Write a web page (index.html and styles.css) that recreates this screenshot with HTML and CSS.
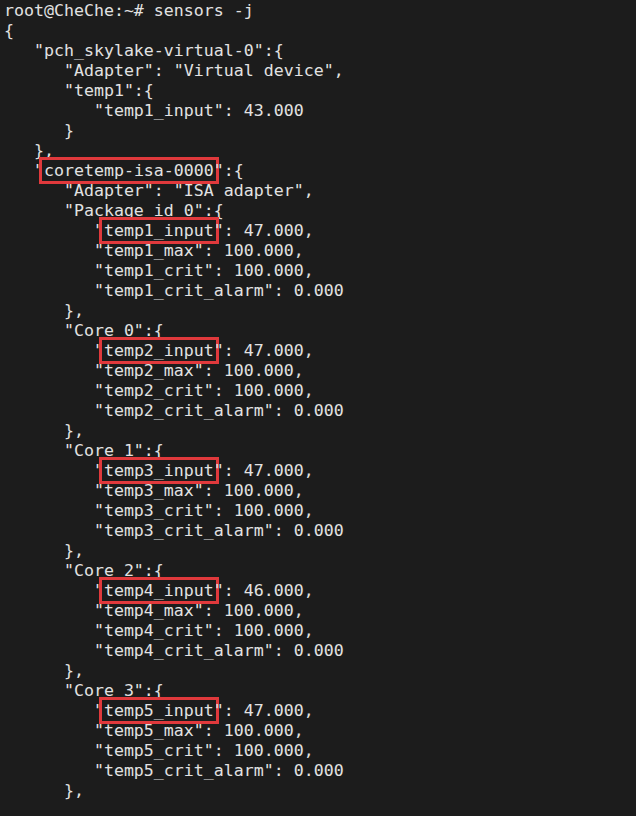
FILE: index.html
```html
<!DOCTYPE html>
<html lang="en">
<head>
<meta charset="utf-8">
<title>sensors -j</title>
<link rel="stylesheet" href="styles.css">
</head>
<body>
<pre class="term">root@CheChe:~# sensors -j
{
   "pch_skylake-virtual-0":{
      "Adapter": "Virtual device",
      "temp1":{
         "temp1_input": 43.000
      }
   },
   "<span class="hl">coretemp-isa-0000</span>":{
      "Adapter": "ISA adapter",
      "Package id 0":{
         "<span class="hl">temp1_input</span>": 47.000,
         "temp1_max": 100.000,
         "temp1_crit": 100.000,
         "temp1_crit_alarm": 0.000
      },
      "Core 0":{
         "<span class="hl">temp2_input</span>": 47.000,
         "temp2_max": 100.000,
         "temp2_crit": 100.000,
         "temp2_crit_alarm": 0.000
      },
      "Core 1":{
         "<span class="hl">temp3_input</span>": 47.000,
         "temp3_max": 100.000,
         "temp3_crit": 100.000,
         "temp3_crit_alarm": 0.000
      },
      "Core 2":{
         "<span class="hl">temp4_input</span>": 46.000,
         "temp4_max": 100.000,
         "temp4_crit": 100.000,
         "temp4_crit_alarm": 0.000
      },
      "Core 3":{
         "<span class="hl">temp5_input</span>": 47.000,
         "temp5_max": 100.000,
         "temp5_crit": 100.000,
         "temp5_crit_alarm": 0.000
      },</pre>
</body>
</html>
```
FILE: styles.css
```css
html, body {
  margin: 0;
  padding: 0;
  background: #1c1c1c;
  height: 100%;
  overflow: hidden;
}

.term {
  margin: 0;
  padding: 1px 0 0 4px;
  font-family: "DejaVu Sans Mono", monospace;
  font-size: 16.6px;
  line-height: 20px;
  color: #e2e2e2;
  white-space: pre;
}

.hl {
  border: 3px solid #e0393c;
  padding: 1px 2px;
  margin: 0 -5px;
}
```
